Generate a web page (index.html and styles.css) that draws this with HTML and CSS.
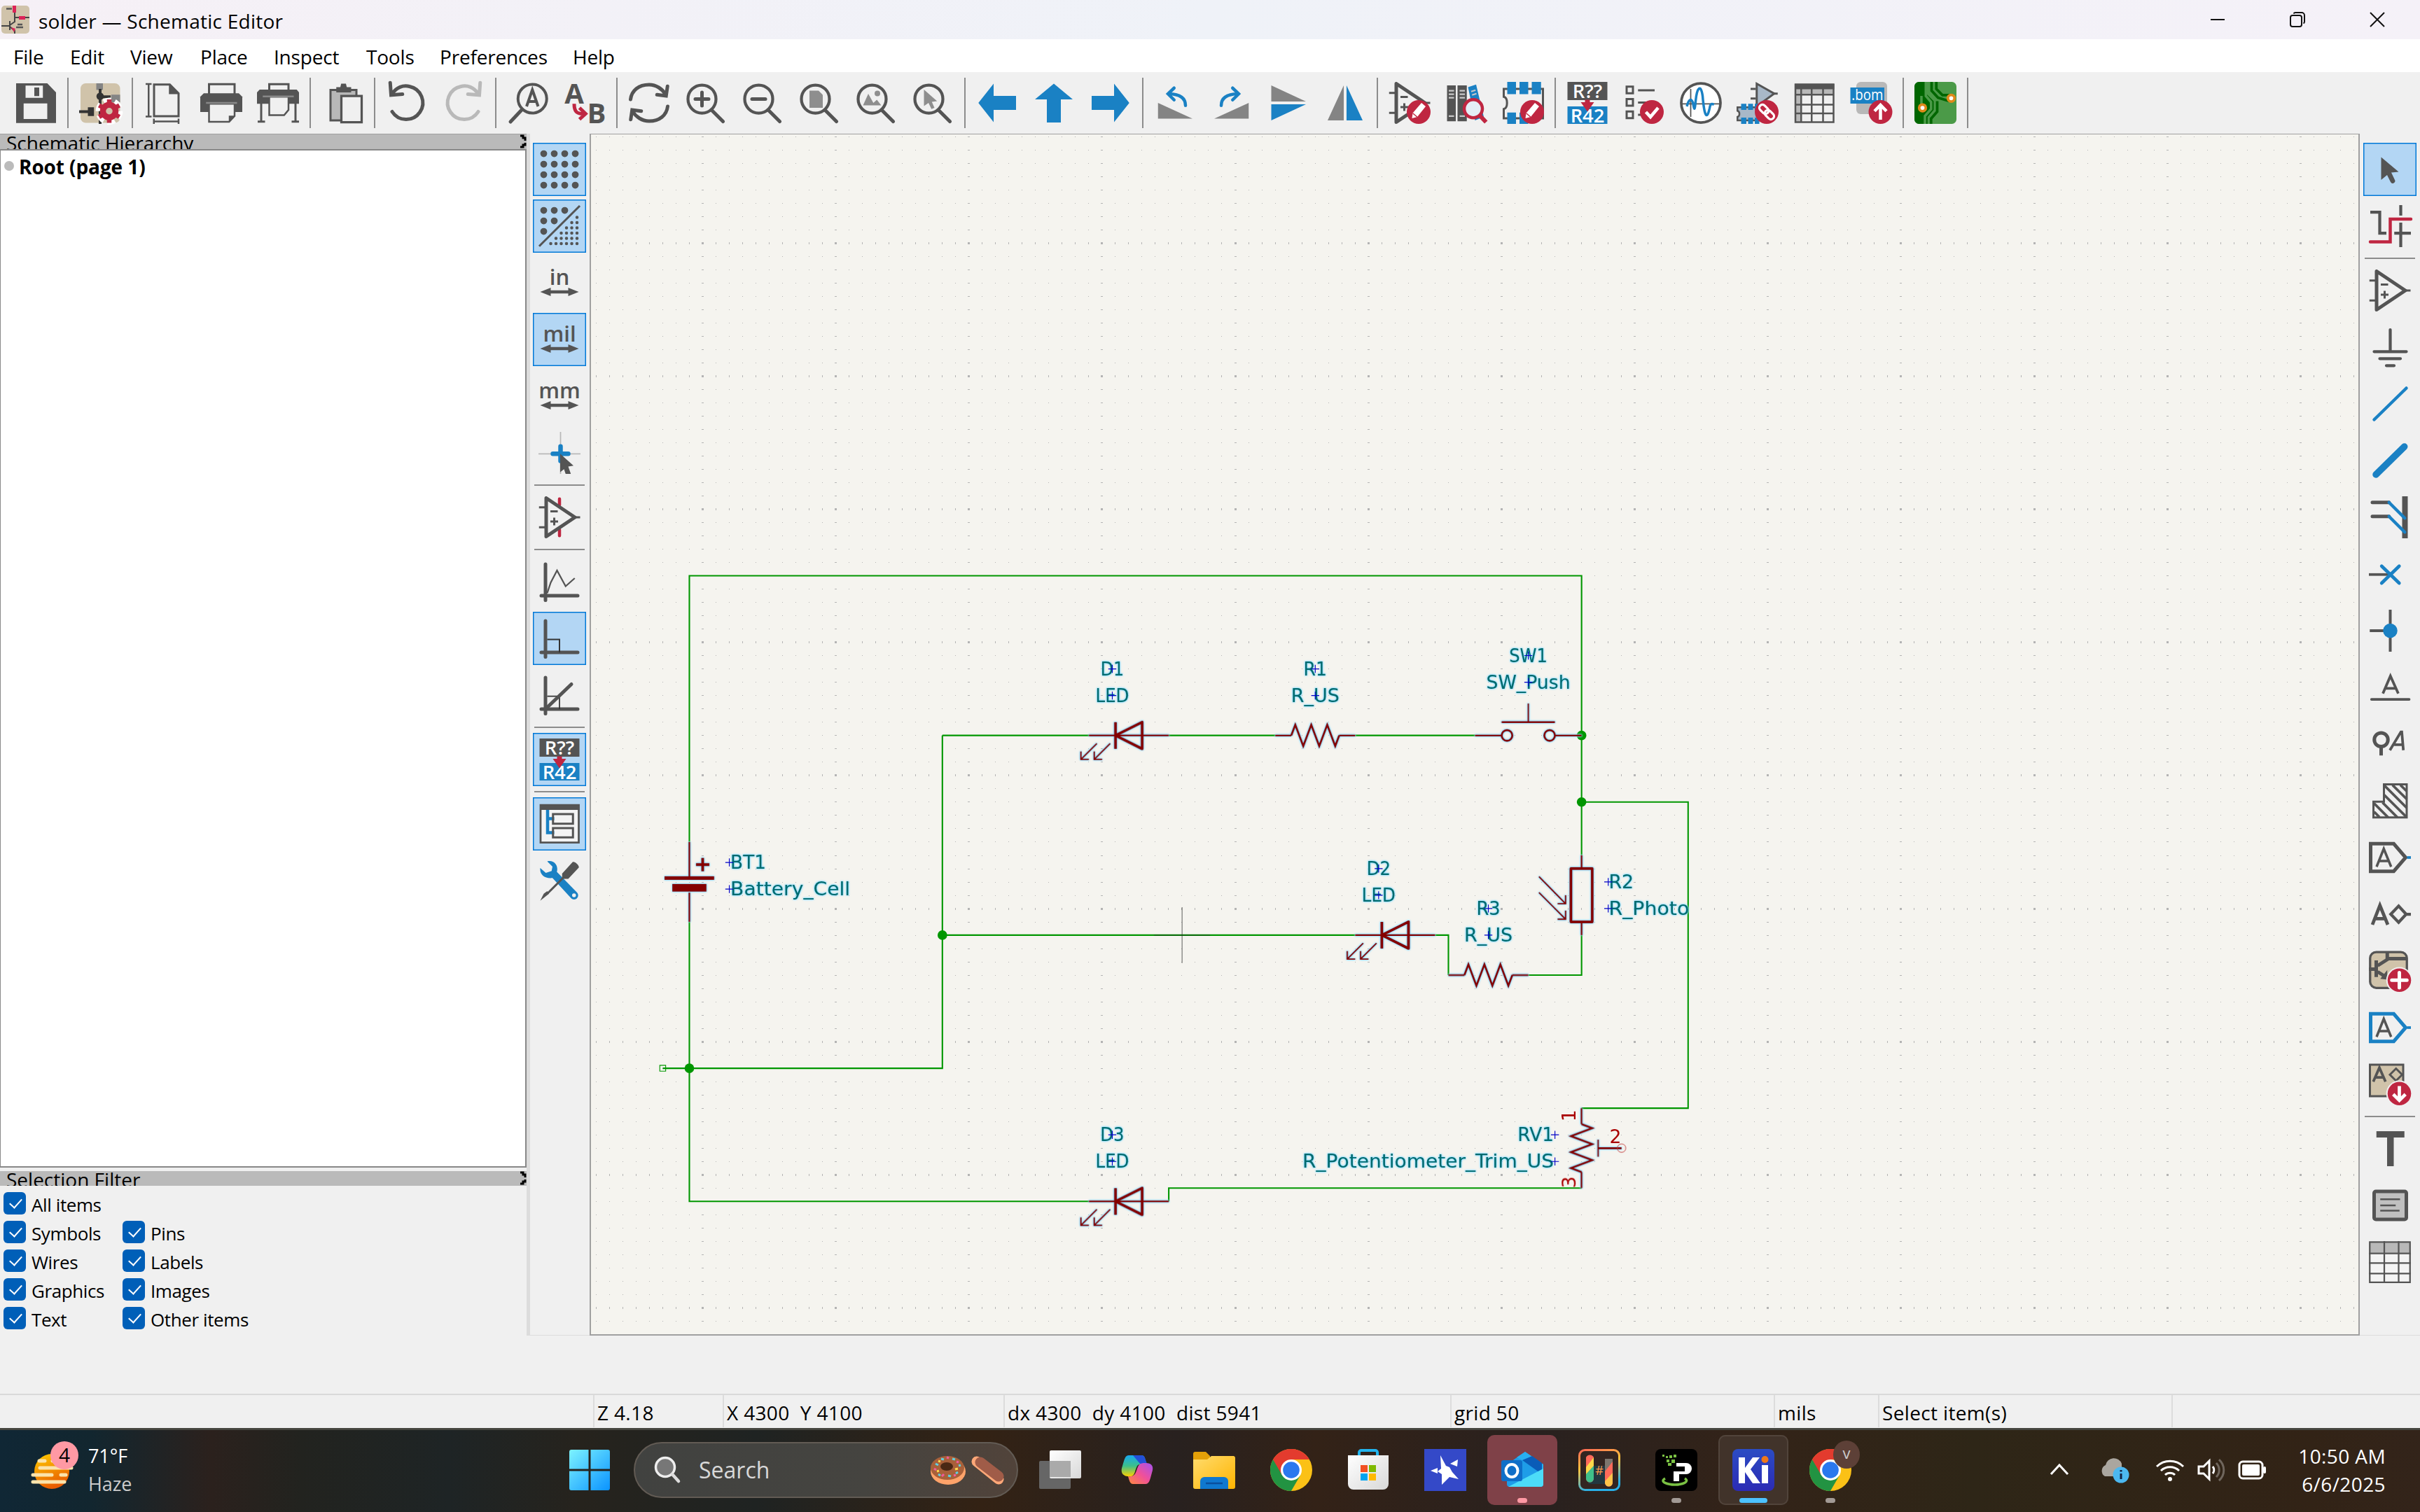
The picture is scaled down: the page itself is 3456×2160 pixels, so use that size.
FILE: index.html
```html
<!DOCTYPE html>
<html lang="en">
<head>
<meta charset="utf-8">
<title>solder — Schematic Editor</title>
<link rel="stylesheet" href="styles.css">
</head>
<body>
<svg class="defs" width="0" height="0">
  <defs>
    <linearGradient id="winGrad" x1="0" y1="0" x2="1" y2="1"><stop offset="0" stop-color="#7df3ff"/><stop offset="1" stop-color="#0a93ff"/></linearGradient>
    <linearGradient id="sunGrad" x1="0" y1="0" x2=".4" y2="1"><stop offset="0" stop-color="#ffcf00"/><stop offset="1" stop-color="#e85c00"/></linearGradient>
    <linearGradient id="folderGrad" x1="0" y1="0" x2="1" y2="1"><stop offset="0" stop-color="#ffdc6e"/><stop offset="1" stop-color="#ffb400"/></linearGradient>
    <linearGradient id="copA" x1="0" y1="0" x2="0" y2="1"><stop offset="0" stop-color="#18a8f0"/><stop offset=".5" stop-color="#3cc08a"/><stop offset="1" stop-color="#ffd000"/></linearGradient>
    <linearGradient id="copB" x1="1" y1="0" x2="0" y2="1"><stop offset="0" stop-color="#a452f0"/><stop offset=".5" stop-color="#f0509a"/><stop offset="1" stop-color="#ff8a3c"/></linearGradient>
    <linearGradient id="rainbow" x1="0" y1="0" x2=".3" y2="1"><stop offset="0" stop-color="#ff6a55"/><stop offset=".45" stop-color="#ffc43c"/><stop offset="1" stop-color="#28b0e8"/></linearGradient>
    <linearGradient id="kiGrad" x1="0" y1="0" x2="0" y2="1"><stop offset="0" stop-color="#2b4cc4"/><stop offset="1" stop-color="#2c2bb4"/></linearGradient>
    <linearGradient id="grayGrad" x1="0" y1="0" x2="1" y2="1"><stop offset="0" stop-color="#fff"/><stop offset="1" stop-color="#d8d8d8"/></linearGradient>

    <!-- schematic symbols, in mils -->
    <g id="led">
      <path class="pin" d="M-150 0H150"/>
      <path class="body" d="M-50-50V50M50-50V50L-50 0Z"/>
      <path class="thin" d="M-120 30L-180 90M-150 90H-180V60M-70 30L-130 90M-100 90H-130V60"/>
    </g>
    <g id="res">
      <path class="pin" d="M-150 0H-90M90 0H150"/>
      <path class="line" d="M-90 0L-75-40L-45 40L-15-40L15 40L45-40L75 40L90 0"/>
    </g>
    <path id="anchor" class="anchor" d="M-15 0H15M0-15V15"/>

    <symbol id="i-redit" viewBox="0 0 24 24"><circle cx="17.2" cy="17.2" r="6.800" fill="#bf2641"/><path d="M13.400 20.800L13.800 17.800L18.800 12L21.200 14L16.400 20Z" fill="#fff"/><path d="M13.800 17.900L16.300 20" stroke="#bf2641" stroke-width=".6"/></symbol>
    <symbol id="i-opamp" viewBox="0 0 24 24"><path class="g2" d="M4.400 1V23L20.800 12Z" stroke-linejoin="round"/><path class="g1" d="M.3 6.300H4M.3 17.700H4M20 12H23.800M6.800 8.600H11M6.800 14.400H11.200M9 12.200V16.600"/></symbol>
    <symbol id="i-r42" viewBox="0 0 24 24"><rect x=".6" y="0" width="22.800" height="10.400" fill="#545454"/><rect x=".6" y="14" width="22.800" height="10" fill="#1a81c4"/><text class="icotext" x="12" y="9.100" textLength="17" lengthAdjust="spacingAndGlyphs">R??</text><text class="icotext" x="12" y="23.300" textLength="19.500" lengthAdjust="spacingAndGlyphs">R42</text><path d="M10.600 10.200H13.400V11.600H15.800L12 17L8.200 11.600H10.600Z" fill="#bf2641"/></symbol>
    <symbol id="i-zoom" viewBox="0 0 24 24"><circle class="g1" cx="9.800" cy="9.800" r="8" style="stroke-width:1.7"/><path class="g2" d="M15.200 16L21.800 22.600" stroke-linecap="round"/></symbol>
    <symbol id="i-axis" viewBox="0 0 24 24"><path class="g2" d="M4 2V22.600M1.600 20H22.400" stroke-linecap="round"/></symbol>
    <symbol id="i-arrow2" viewBox="0 0 24 24"><path class="g2" d="M5 17.200H19" style="stroke-width:1.8"/><path class="gf" d="M1 17.200L7 14.800V19.600ZM23 17.200L17 14.800V19.600Z"/></symbol>
    <symbol id="i-tag" viewBox="0 0 24 24"><path d="M1 4.100H14.200L21 12L14.200 19.900H1Z" fill="none" stroke="currentColor" stroke-width="2"/><path d="M21.800 12H24" stroke="#1a81c4" stroke-width="1.500"/><path class="g1" d="M4.400 17.300L8.500 7L12.700 17.300M5.800 14H11.300" style="stroke-width:1.400"/></symbol>
    <symbol id="i-chrome" viewBox="0 0 60 60"><circle cx="30" cy="30" r="30" fill="#fbc116"/><path d="M4 15A30 30 0 0 0 30 60L43 37.500L30 30Z" fill="#229342"/><path d="M4 15L17 37.500L30 30V15H56A30 30 0 0 0 4 15Z" fill="#e33b2e"/><circle cx="30" cy="30" r="15" fill="#fff"/><circle cx="30" cy="30" r="11.800" fill="#2a78ee"/></symbol>
    <symbol id="i-arrowcur" viewBox="0 0 24 24"><path class="gf" d="M7 5L17 13.400L12.800 13.800L14.800 18A1.300 1.300 0 0 1 12.400 19.200L10.400 15.200L7 18Z"/></symbol>
  </defs>
</svg>

<header class="titlebar">
  <svg class="appicon" viewBox="0 0 40 40"><rect width="40" height="40" rx="5" fill="#d0c3aa"/><path d="M19 0V24M19 17H40M0 29H12M12 22V35M12 28L19 23M12 30L19 36V40" fill="none" stroke="#444" stroke-width="2"/><path d="M16 0H21V10H16ZM25 15H34V20H25Z" fill="#dc2458"/><path d="M14 31L20 33L18 38Z" fill="#dc2458"/><path d="M7 4.500H15M23 27H30M21 31H31" stroke="#555" stroke-width="2.500"/></svg>
  <span class="title">solder — Schematic Editor</span>
  <div class="winbtns">
    <svg viewBox="0 0 24 24"><path d="M2 12H22" /></svg>
    <svg viewBox="0 0 24 24"><rect x="2" y="6" width="16" height="16" rx="3"/><path d="M6.500 3.500A3 3 0 0 1 9 2H18A4 4 0 0 1 22 6V15A3 3 0 0 1 20.500 17.500"/></svg>
    <svg viewBox="0 0 24 24"><path d="M2 2L22 22M22 2L2 22"/></svg>
  </div>
</header>

<nav class="menubar"><span>File</span><span>Edit</span><span>View</span><span>Place</span><span>Inspect</span><span>Tools</span><span>Preferences</span><span>Help</span></nav>

<div class="toolbar">
  <div class="tb"><svg viewBox="0 0 24 24"><path class="gf" d="M.8.8H18.600L23.600 6V23.500H.8Z"/><path d="M6.200 2.100H16.100V9.100H6.200ZM5.100 12.300H18.600V21.200H5.100Z" fill="#f0f0f0"/><path class="gf" d="M11.200 3.200H14V8.100H11.200Z"/></svg></div>
  <i class="sep"></i>
  <div class="tb"><svg viewBox="0 0 24 24"><rect x=".8" y=".8" width="22.600" height="22.600" rx="3" fill="#d0c3aa"/><path d="M9.800.8H13.600V4.600H9.800ZM18.300 7.300H23.400V11.600H18.300Z" fill="#848484"/><path d="M12 4V24M12 8.500H18M0 17H7" stroke="#333" stroke-width="1.600"/><circle cx="12" cy="8.200" r="2.100" fill="#333"/><path d="M5 14.500H8.500V19.500H5Z" fill="#333"/><circle cx="17.200" cy="16.700" r="5" fill="none" stroke="#fff" stroke-width="5.500" stroke-dasharray="3.400 1.800"/><circle cx="17.200" cy="16.700" r="3.600" fill="none" stroke="#bf2641" stroke-width="3.400"/><path d="M17.200 10V12M17.200 21.400V23.400M11.400 13.400L13.200 14.400M21.200 19L23 20M11.400 20L13.200 19M21.200 14.400L23 13.400" stroke="#bf2641" stroke-width="2.600"/></svg></div>
  <i class="sep"></i>
  <div class="tb"><svg viewBox="0 0 24 24"><path class="g1" d="M6 1.500H15L20 6.500V19.600H6Z"/><path class="gf" d="M14.500 1L20.500 7H14.500Z"/><path class="g1" d="M2.900 1.300V19.700M1.200 1.200H4.600M1.200 19.800H4.600M6 22.600H20M5.900 21V24M20 21V24" style="stroke-width:1"/></svg></div>
  <div class="tb"><svg viewBox="0 0 24 24"><path class="g1" d="M5 7V1.300H19.600V7"/><path class="gf" d="M2 6.500H22L24 8.500V17.200H0V8.500Z"/><path d="M5 12.500H19.600V19.500L16.500 22.800H5Z" fill="#f0f0f0" stroke="#545454"/><path d="M3.300 12H21" stroke="#888"/><path class="gf" d="M19.800 19.300L16.300 23V19.300Z"/></svg></div>
  <div class="tb"><svg viewBox="0 0 24 24"><path class="g1" d="M7 5V1.300H18V5M2.400 12V22.600M22 12V22.600M.4 22.700H4.600M19.800 22.700H24"/><path class="gf" d="M1.500 4.400H22.700L24 6V12.500H0V6Z"/><path d="M7 8.500H18V16L15.500 19H7Z" fill="#f0f0f0" stroke="#545454"/><path d="M3.300 8.300H21" stroke="#888"/></svg></div>
  <i class="sep"></i>
  <div class="tb"><svg viewBox="0 0 24 24"><path d="M5.200 4.600H20V22H5.200Z" fill="#b8b8b8" stroke="#545454" stroke-width="1.200"/><path class="gf" d="M8.500 6V3H10.800L11.300 1H14L14.500 3H17V6Z"/><path d="M11.400 8H23V23H11.400Z" fill="#f0f0f0" stroke="#545454" stroke-width="1.300"/></svg></div>
  <i class="sep"></i>
  <div class="tb"><svg viewBox="0 0 24 24"><path class="g2" d="M2.500.5L3 7.500L9.500 7M3.500 7C6 3 10 1.700 13.500 2.600A9.500 9.500 0 1 1 3.600 17" stroke-linecap="round"/></svg></div>
  <div class="tb faded"><svg viewBox="0 0 24 24"><path class="g2" d="M21.500.5L21 7.500L14.500 7M20.500 7C18 3 14 1.700 10.500 2.600A9.500 9.500 0 1 0 20.400 17" stroke-linecap="round"/></svg></div>
  <i class="sep"></i>
  <div class="tb"><svg viewBox="0 0 24 24"><circle class="g1" cx="14.500" cy="9.600" r="8.200" style="stroke-width:1.600"/><path class="g2" d="M8.600 15.800L2 22.800" stroke-linecap="round"/><path class="g2" d="M11.200 14L14.500 4.500L17.800 14M12.200 11.200H16.800" style="stroke-width:1.600"/></svg></div>
  <div class="tb"><svg viewBox="0 0 24 24"><text x="6" y="12.300" class="lt">A</text><text x="18.800" y="23.400" class="lt">B</text><path d="M6 12.500C6 17 7.500 18.200 11 18.200M9 14.800L12.500 18.200L9 21.400" fill="none" stroke="#bf2641" stroke-width="2"/></svg></div>
  <i class="sep"></i>
  <div class="tb"><svg viewBox="0 0 24 24"><path class="g2" d="M1.400 10C2 5 6 1.600 12 1.600C16 1.600 19.500 4 21.500 7.200M22.500 2.500L21.700 8L16.500 7.300M22.600 14C22 19 18 22.400 12 22.400C8 22.400 4.500 20 2.500 16.800M1.500 21.500L2.300 16L7.500 16.700" stroke-linecap="round"/></svg></div>
  <div class="tb"><svg viewBox="0 0 24 24"><use href="#i-zoom"/><path class="g2" d="M6 9.800H13.600M9.800 6V13.600" stroke-linecap="round"/></svg></div>
  <div class="tb"><svg viewBox="0 0 24 24"><use href="#i-zoom"/><path class="g2" d="M6 9.800H13.600" stroke-linecap="round"/></svg></div>
  <div class="tb"><svg viewBox="0 0 24 24"><use href="#i-zoom"/><path d="M6.400 5H11.600L14 7.400V14.800H6.400Z" fill="#8e8e8e"/></svg></div>
  <div class="tb"><svg viewBox="0 0 24 24"><use href="#i-zoom"/><path d="M4.600 13.400L7.600 6.800L10.500 12L12.500 10.200L15 13.400Z" fill="#8e8e8e"/><circle cx="12.800" cy="6.600" r="1.600" fill="#8e8e8e"/></svg></div>
  <div class="tb"><svg viewBox="0 0 24 24"><use href="#i-zoom"/><path d="M7 4.400L14.500 11L11.500 11.400L13 14.800L11.300 15.500L9.600 12L7 13.800Z" fill="#8e8e8e"/></svg></div>
  <i class="sep"></i>
  <div class="tb blue"><svg viewBox="0 0 24 24"><path d="M1.300 12L10 1V8H22.800V16H10V23Z"/></svg></div>
  <div class="tb blue"><svg viewBox="0 0 24 24"><path d="M12 1L22.800 10H16V23.200H8V10H1.200Z"/></svg></div>
  <div class="tb blue"><svg viewBox="0 0 24 24"><path d="M22.700 12L14 1V8H1.200V16H14V23Z"/></svg></div>
  <i class="sep"></i>
  <div class="tb"><svg viewBox="0 0 24 24"><path d="M2.300 12L22 21H2.300Z" fill="#848484"/><path class="b2" d="M18 13.500C18 9.500 15 7 8.500 6.800M11.500 3.500L8 6.800L11.500 10.300" stroke-linecap="round"/></svg></div>
  <div class="tb"><svg viewBox="0 0 24 24"><path d="M21.700 12L2 21H21.700Z" fill="#848484"/><path class="b2" d="M6 13.500C6 9.500 9 7 15.500 6.800M12.500 3.500L16 6.800L12.500 10.300" stroke-linecap="round"/></svg></div>
  <div class="tb"><svg viewBox="0 0 24 24"><path d="M2.200 2L22 11.200H2.200Z" fill="#848484"/><path d="M2.200 22L22 12.800H2.200Z" fill="#1a81c4"/></svg></div>
  <div class="tb"><svg viewBox="0 0 24 24"><path d="M2 22L11.200 2V22Z" fill="#848484"/><path d="M22 22L12.800 2V22Z" fill="#1a81c4"/></svg></div>
  <i class="sep"></i>
  <div class="tb"><svg viewBox="0 0 24 24"><use href="#i-opamp"/><use href="#i-redit"/></svg></div>
  <div class="tb"><svg viewBox="0 0 24 24"><path class="gf" d="M1 2H6V22.500H1ZM7 2H12.300V22.500H7Z"/><path d="M13 3L17.600 1.500L22 20L17 22Z" fill="#1a81c4"/><path d="M2 5H5M2 7H5M2 9H5M8.200 5H11.200M8.200 7H11.200M8.200 9H11.200M2 19.500H5M8.200 19.500H11.200M14.800 5.500L17.300 4.700M15.300 7.500L17.800 6.700" stroke="#c8c8c8" stroke-width=".9"/><circle cx="16" cy="15.300" r="5.200" fill="#e4eef6" stroke="#bf2641" stroke-width="1.800"/><path d="M19.500 19L23.300 23" stroke="#bf2641" stroke-width="2.400"/></svg></div>
  <div class="tb"><svg viewBox="0 0 24 24"><path class="g1" d="M1 4H23.400V20.800H1V15.500C3.500 15 3.500 9 1 8.500Z"/><path d="M3 0H8V7H3ZM10 0H15V7H10ZM17 0H22.300V7H17ZM3 17.500H8V24H3ZM10 17.500H15V24H10Z" fill="#1a81c4"/><use href="#i-redit"/></svg></div>
  <i class="sep"></i>
  <div class="tb"><svg viewBox="0 0 24 24"><use href="#i-r42"/></svg></div>
  <div class="tb"><svg viewBox="0 0 24 24"><path class="g1" d="M2 2.700H5.600V6.500H2ZM2 9.800H5.600V13.600H2ZM2 16.900H5.600V20.700H2ZM8.500 4.800H18M8.500 11.800H15M8.500 18.800H11"/><circle cx="16.400" cy="17.200" r="6.800" fill="#bf2641"/><path d="M13 17.200L15.600 20L20 14.800" fill="none" stroke="#fff" stroke-width="1.800"/></svg></div>
  <div class="tb"><svg viewBox="0 0 24 24"><circle cx="12" cy="12" r="11.200" fill="#fff" stroke="#545454" stroke-width="1.500"/><path class="g1" d="M6.200 4V20M1 12.500H23" style="stroke-width:.7"/><path class="b2" d="M4 14C5 10 6.500 9 7.500 12C8.300 17 8.600 16 9 11C9.800 3 12 1 13 8C14 20 15.500 22 17 15C17.500 12 18.500 12.500 19.500 13" style="stroke-width:1.400"/></svg></div>
  <div class="tb"><svg viewBox="0 0 24 24"><path d="M11.500 1V14L21.500 6.700Z" fill="#a8b8c8" stroke="#545454" stroke-width="1.200"/><path class="g1" d="M8 4H11M8 9.500H11M21 6.700H23.500"/><path d="M.5 14.500H13V22H.5V20C2 19.500 2 17 .5 16.500Z" fill="#a8b8c8" stroke="#545454"/><path d="M2.600 12.500H5.600V16H2.600ZM6.600 12.500H9.400V16H6.600ZM10.400 12.500H13V16H10.400ZM2.600 20.400H5.600V24H2.600ZM6.600 20.400H9.400V24H6.600ZM10.400 20.400H13V24H10.400Z" fill="#1a81c4"/><circle cx="17.200" cy="17.200" r="6.800" fill="#bf2641"/><g transform="rotate(45 17.200 17.200)" fill="none" stroke="#fff" stroke-width="1.300"><rect x="12" y="15.400" width="6" height="3.600" rx="1.800"/><rect x="16.400" y="15.400" width="6" height="3.600" rx="1.800"/></g></svg></div>
  <div class="tb"><svg viewBox="0 0 24 24"><path d="M1.200 1.500H23V23H1.200Z" fill="#f0f0f0"/><path d="M1.200 3.500H23V7.200H1.200ZM1.200 3H4.200V23H1.200Z" fill="#b8b8b8"/><path class="g1" d="M1.200 1.500H23V23H1.200ZM1 7.300H23M1 13H23M1 18H23M4.500 4V23M10.500 4V23M17 4V23" style="stroke-width:1"/><path class="gf" d="M.8 1H23.400V4.200H.8Z"/></svg></div>
  <div class="tb"><svg viewBox="0 0 24 24"><rect x="3.600" y="0" width="17.600" height="18.400" rx="2.500" fill="#b8b8b8"/><path d="M.2 3.200H19.600V12.400H.2Z" fill="#1a81c4"/><text class="bomtxt" x="9.900" y="10.300" textLength="18" lengthAdjust="spacingAndGlyphs">.bom</text><circle cx="17.400" cy="17.200" r="6.800" fill="#bf2641"/><path d="M17.400 21.600V14M14 16.700L17.400 13.200L20.800 16.700" fill="none" stroke="#fff" stroke-width="1.800"/></svg></div>
  <i class="sep"></i>
  <div class="tb"><svg viewBox="0 0 24 24"><rect width="24" height="24" rx="2.600" fill="#4b9a48"/><path d="M2.600 0H7V7L11 11V16L7.500 20V24H2.600A2.600 2.600 0 0 1 0 21.400V2.600A2.600 2.600 0 0 1 2.600 0Z" fill="#006600"/><path d="M9.800 0V5L13.500 9L20 11M12.500 0V4L16 7.500H20M13 11V17L9.500 21V24" fill="none" stroke="#006600" stroke-width="1.500"/><path d="M4 15V8M6.500 0V8L9.500 11.500V15.500L6 19.500V24" fill="none" stroke="#4b9a48" stroke-width="1.400"/><circle cx="4.600" cy="14.800" r="1.900" fill="#fff" stroke="#e08a1a" stroke-width="1.500"/><circle cx="21" cy="9.300" r="1.900" fill="#fff" stroke="#e08a1a" stroke-width="1.500"/></svg></div>
  <i class="sep"></i>
</div>

<main class="work">
  <aside class="dock">
    <div class="cap"><span>Schematic Hierarchy</span><svg class="x" viewBox="0 0 10 20"><path d="M1 2H5V5H8V9M8 12V15H5V18H1"/></svg></div>
    <div class="tree"><i class="dot"></i><b>Root (page 1)</b></div>
    <div class="cap second"><span>Selection Filter</span><svg class="x" viewBox="0 0 10 20"><path d="M1 2H5V5H8V9M8 12V15H5V18H1"/></svg></div>
    <div class="filter">
      <label class="wide"><i class="cb"></i>All items</label>
      <label><i class="cb"></i>Symbols</label><label><i class="cb"></i>Pins</label>
      <label><i class="cb"></i>Wires</label><label><i class="cb"></i>Labels</label>
      <label><i class="cb"></i>Graphics</label><label><i class="cb"></i>Images</label>
      <label><i class="cb"></i>Text</label><label><i class="cb"></i>Other items</label>
    </div>
  </aside>
  <i class="sash"></i>

  <div class="vbar">
    <div class="vb on"><svg viewBox="0 0 24 24"><path class="dots" d="M3 3h.01M9 3h.01M15 3h.01M21 3h.01M3 9h.01M9 9h.01M15 9h.01M21 9h.01M3 15h.01M9 15h.01M15 15h.01M21 15h.01M3 21h.01M9 21h.01M15 21h.01M21 21h.01"/></svg></div>
    <div class="vb on"><svg viewBox="0 0 24 24"><path class="dots" d="M3 3h.01M9 3h.01M15 3h.01M3 9h.01M9 9h.01M3 15h.01"/><path class="g1" d="M.4 23.500L23.600.4"/><path class="dots sm" d="M22 7h.01M19 10h.01M22 10h.01M16 13h.01M19 13h.01M22 13h.01M13 16h.01M16 16h.01M19 16h.01M22 16h.01M10 19h.01M13 19h.01M16 19h.01M19 19h.01M22 19h.01M7 22h.01M10 22h.01M13 22h.01M16 22h.01M19 22h.01M22 22h.01"/></svg></div>
    <div class="vb"><svg viewBox="0 0 24 24"><text class="unit" x="12" y="13">in</text><use href="#i-arrow2"/></svg></div>
    <div class="vb on"><svg viewBox="0 0 24 24"><text class="unit" x="12" y="13">mil</text><use href="#i-arrow2"/></svg></div>
    <div class="vb"><svg viewBox="0 0 24 24"><text class="unit" x="12" y="13">mm</text><use href="#i-arrow2"/></svg></div>
    <div class="vb"><svg viewBox="0 0 24 24"><path d="M12.600 0V24M0 12.500H24" stroke="#b8b8b8" stroke-width=".7"/><path class="b2" d="M12.600 8.300V16.600M8.200 12.500H17" stroke-linecap="round" style="stroke-width:2.600"/><path class="gf" d="M12.400 12.500L20 19.300L17 19.800L18.500 24H15.500L14.600 21.300L12.400 23Z"/></svg></div>
    <i class="hsep"></i>
    <div class="vb"><svg viewBox="0 0 24 24"><path d="M12 1.500V5M12 19V22.500" stroke="#bf2641" stroke-width="1.800" stroke-linecap="round"/><use href="#i-opamp"/></svg></div>
    <i class="hsep"></i>
    <div class="vb"><svg viewBox="0 0 24 24"><use href="#i-axis"/><path class="g1" d="M5 18.500L7 12.500L10.600 5.600L15.500 14.600L20.700 10" style="stroke-width:.9"/></svg></div>
    <div class="vb on"><svg viewBox="0 0 24 24"><use href="#i-axis"/><path class="g1" d="M5 12.600H12V20" style="stroke-width:.8;stroke:#333"/></svg></div>
    <div class="vb"><svg viewBox="0 0 24 24"><use href="#i-axis"/><path class="g1" d="M5 12.600H12V20" style="stroke-width:.7;stroke:#333"/><path class="g2" d="M5 19L18.800 5.800" stroke-linecap="round"/></svg></div>
    <i class="hsep"></i>
    <div class="vb on"><svg viewBox="0 0 24 24"><use href="#i-r42"/></svg></div>
    <i class="hsep"></i>
    <div class="vb on"><svg viewBox="0 0 24 24"><path d="M1.200 1.200H23V22.600H1.200Z" fill="#f4f4f4" stroke="#545454" stroke-width="1.100"/><path class="gf" d="M.8.800H23.400V4H.8Z"/><path class="b2" d="M5.200 4V17H9M5.200 9H9"/><path class="g1" d="M8.300 6.400H19.700V11.900H8.300ZM8.300 14.400H19.700V19.700H8.300Z"/></svg></div>
    <div class="vb"><svg viewBox="0 0 24 24"><path d="M5 1C9 0 11.500 3.500 10.500 7L22 18.800C24 21 21 24.300 18.600 22L8 10.500C3.500 11 .6 8.500 1 4.800L4.200 7.600L7.500 6.500L8 4Z" fill="#1a81c4"/><circle cx="20.300" cy="20.400" r="1.100" fill="#f0f0f0"/><path class="g1" d="M14.500 10L5 19.500"/><path class="gf" d="M13.500 8L19.500 1.400C20.500.6 23.600 3.400 23 4.600L17 11L13.500 11ZM1 23.500L3 19.500L5 18L6 19.500Z"/></svg></div>
  </div>

  <section class="sheet">
    <svg class="schematic" width="2525" height="1715" viewBox="0 0 2525 1715">
      <path id="grid" class="grid"/>
      <!-- origin sits on a major grid crossing, 50 mil = one grid step -->
      <g transform="translate(159.500 155) scale(.38035)">
        <g class="wire">
          <path d="M-50 2250V1250H3300V2300M3300 2600V2750H3100M3300 2100H3700V3250H3300M900 1850V3100H-150M900 1850H1450M900 2600H2450M2750 2600H2800V2750M-50 2550V3600H1450M1750 3600V3550H3300M1750 1850H2150M2450 1850H2900"/>
          <path class="tiny" d="M-161 3089H-139V3111H-161Z"/>
        </g>
        <g class="junction"><circle cx="3300" cy="1850" r="18"/><circle cx="3300" cy="2100" r="18"/><circle cx="900" cy="2600" r="18"/><circle cx="-50" cy="3100" r="18"/></g>
        <g class="sym">
          <use href="#led" x="1600" y="1850"/><use href="#led" x="2600" y="2600"/><use href="#led" x="1600" y="3600"/>
          <use href="#res" x="2300" y="1850"/><use href="#res" x="2950" y="2750"/>
          <path class="pin" d="M2900 1850H3000M3200 1850H3300"/>
          <circle class="line" cx="3020" cy="1850" r="20"/><circle class="line" cx="3180" cy="1850" r="20"/>
          <path class="line" d="M3000 1800H3200"/><path class="thin" d="M3100 1800V1730"/>
          <path class="pin" d="M3300 2300V2350M3300 2550V2600"/>
          <rect class="body" x="3260" y="2350" width="80" height="200"/>
          <path class="thin" d="M3140 2380L3240 2482M3210 2482H3240V2450M3140 2440L3240 2540M3210 2540H3240V2508"/>
          <path class="pin" d="M-50 2250V2385M-50 2440V2550"/>
          <path d="M-143 2379H43V2392H-143ZM-114 2408H14V2436H-114Z" fill="#840000"/><path class="body" d="M-25 2335H25M0 2310V2360"/>
          <g transform="translate(3300 3400) rotate(90)"><use href="#res"/></g>
          <path class="line" d="M3362 3400H3450"/><path class="thin" d="M3362 3368V3432"/>
        </g>
        <circle class="open" cx="3450" cy="3400" r="16"/>
        <g class="pinno"><text transform="translate(3278 3278) rotate(-90)">1</text><text transform="translate(3278 3528) rotate(-90)">3</text><text x="3427" y="3382">2</text></g>
        <g class="label">
          <text x="1538" y="1624" textLength="88" lengthAdjust="spacingAndGlyphs">D1</text><text x="1538" y="1724" textLength="126" lengthAdjust="spacingAndGlyphs">LED</text>
          <text x="2300" y="1624" textLength="88" lengthAdjust="spacingAndGlyphs">R1</text><text x="2300" y="1724" textLength="182" lengthAdjust="spacingAndGlyphs">R_US</text>
          <text x="3100" y="1574" textLength="144" lengthAdjust="spacingAndGlyphs">SW1</text><text x="3100" y="1674" textLength="316" lengthAdjust="spacingAndGlyphs">SW_Push</text>
          <text x="2538" y="2374" textLength="90" lengthAdjust="spacingAndGlyphs">D2</text><text x="2538" y="2474" textLength="126" lengthAdjust="spacingAndGlyphs">LED</text>
          <text x="2950" y="2524" textLength="90" lengthAdjust="spacingAndGlyphs">R3</text><text x="2950" y="2624" textLength="182" lengthAdjust="spacingAndGlyphs">R_US</text>
          <text x="1538" y="3374" textLength="90" lengthAdjust="spacingAndGlyphs">D3</text><text x="1538" y="3474" textLength="126" lengthAdjust="spacingAndGlyphs">LED</text>
        </g>
        <g class="label start">
          <text x="104" y="2351" textLength="134" lengthAdjust="spacingAndGlyphs">BT1</text><text x="104" y="2451" textLength="450" lengthAdjust="spacingAndGlyphs">Battery_Cell</text>
          <text x="3402" y="2424" textLength="94" lengthAdjust="spacingAndGlyphs">R2</text><text x="3402" y="2524" textLength="302" lengthAdjust="spacingAndGlyphs">R_Photo</text>
        </g>
        <g class="label end"><text x="3196" y="3374" textLength="136" lengthAdjust="spacingAndGlyphs">RV1</text><text x="3196" y="3474" textLength="944" lengthAdjust="spacingAndGlyphs">R_Potentiometer_Trim_US</text></g>
        <use href="#anchor" x="1538" y="1600"/><use href="#anchor" x="1538" y="1700"/><use href="#anchor" x="2300" y="1600"/><use href="#anchor" x="2300" y="1700"/><use href="#anchor" x="3100" y="1550"/><use href="#anchor" x="3100" y="1650"/>
        <use href="#anchor" x="2538" y="2350"/><use href="#anchor" x="2538" y="2450"/><use href="#anchor" x="2950" y="2500"/><use href="#anchor" x="2950" y="2600"/><use href="#anchor" x="1538" y="3350"/><use href="#anchor" x="1538" y="3450"/>
        <use href="#anchor" x="100" y="2327"/><use href="#anchor" x="100" y="2427"/><use href="#anchor" x="3400" y="2400"/><use href="#anchor" x="3400" y="2500"/><use href="#anchor" x="3200" y="3350"/><use href="#anchor" x="3200" y="3450"/>
        <path class="cursor" d="M1800 2495V2705M1695 2600H1905"/>
      </g>
    </svg>
  </section>

  <div class="vbar right">
    <div class="vb on"><svg viewBox="0 0 24 24"><use href="#i-arrowcur"/></svg></div>
    <div class="vb"><svg viewBox="0 0 24 24"><path class="g2" d="M.8 4H6.200V16H10M14.500 16H24M18.200 0V24" style="stroke-width:1.700"/><path d="M.8 21H12.200V8H24" fill="none" stroke="#f0f0f0" stroke-width="4"/><path d="M.8 21H12.200V8H24" fill="none" stroke="#bf2641" stroke-width="1.800" stroke-linecap="round"/></svg></div>
    <i class="hsep"></i>
    <div class="vb"><svg viewBox="0 0 24 24"><use href="#i-opamp"/></svg></div>
    <div class="vb"><svg viewBox="0 0 24 24"><path class="g2" d="M12.200 2V14.500M3 14.500H21.400M6.200 18.500H18M10 22.500H14.400" stroke-linecap="round" style="stroke-width:1.700"/></svg></div>
    <div class="vb"><svg viewBox="0 0 24 24"><path class="b2" d="M3 21L21.400 3" stroke-linecap="round"/></svg></div>
    <div class="vb"><svg viewBox="0 0 24 24"><path class="b2" d="M4 20L20.300 4" stroke-linecap="round" style="stroke-width:3.800"/></svg></div>
    <div class="vb"><svg viewBox="0 0 24 24"><path class="g2" d="M2 3.500H11.500M2 11.500H11.500" stroke-linecap="round"/><path class="gf" d="M19 0H22.200V24H19Z"/><path class="b2" d="M11.500 3.500L20.500 12.500M11.500 11.500L20.500 20.500" stroke-linecap="round"/></svg></div>
    <div class="vb"><svg viewBox="0 0 24 24"><path class="g2" d="M0 12.300H12" style="stroke-width:1.500"/><path class="b2" d="M7.300 7.500L17.300 17.200M17.300 7.500L7.300 17.200" stroke-linecap="round" style="stroke-width:1.900"/></svg></div>
    <div class="vb"><svg viewBox="0 0 24 24"><path class="g2" d="M12.200 0V24M.5 12H12" style="stroke-width:1.600"/><circle cx="12.200" cy="12" r="4.100" fill="#1a81c4"/></svg></div>
    <div class="vb"><svg viewBox="0 0 24 24"><path class="g2" d="M8 15.500L12.300 5.500L16.800 15.500M9.600 12.500H15" style="stroke-width:1.500"/><path class="g2" d="M1.500 18.800H23" stroke-linecap="round" style="stroke-width:1.500"/></svg></div>
    <div class="vb"><svg viewBox="0 0 24 24"><circle class="g2" cx="7" cy="9.500" r="3.900"/><path class="g2" d="M7 13.500V18.500"/><path class="g1" d="M12 15.500L18.300 5H18.800L19.700 15.500M14.500 12.300H19.500" style="stroke-width:1.500"/></svg></div>
    <div class="vb"><svg viewBox="0 0 24 24"><path class="g1" d="M2.600 21.500V12.500H8.600V2.600H21.600V21.500Z"/><path class="g2" d="M8.600 3L21.600 16M8.600 8.500L21.200 21M13.500 3L21.600 11M18 3L21.600 6.500M7.800 13L16.300 21.500M3 13.500L11 21.500M3 18.300L6 21.300" style="stroke-width:1.500"/></svg></div>
    <div class="vb tagdark"><svg viewBox="0 0 24 24"><use href="#i-tag"/></svg></div>
    <div class="vb"><svg viewBox="0 0 24 24"><path class="g2" d="M2 18L6.300 7L10.800 18M3.600 14.500H9.200" style="stroke-width:1.900"/><path class="g2" d="M12.500 12L17 7.300L21.300 12L17 16.700ZM21.300 12H24" style="stroke-width:1.700"/></svg></div>
    <div class="vb"><svg viewBox="0 0 24 24"><rect x=".7" y="1.200" width="21" height="20.500" rx="3.500" fill="#d0c3aa" stroke="#545454" stroke-width="1.300"/><path class="g2" d="M0 11H4M10.500 1V5.500L5 9M10.500 5H22M5 12.500L9 15"/><path class="gf" d="M3.200 6H5.200V15.500H3.200ZM6.500 16.500L10.500 11.500V17Z"/><circle cx="17.400" cy="17.300" r="7.500" fill="#f0f0f0"/><circle cx="17.400" cy="17.300" r="6.700" fill="#bf2641"/><path d="M17.400 13V21.600M13.100 17.300H21.700" stroke="#fff" stroke-width="2" stroke-linecap="round"/></svg></div>
    <div class="vb tagblue"><svg viewBox="0 0 24 24"><use href="#i-tag"/></svg></div>
    <div class="vb"><svg viewBox="0 0 24 24"><rect x=".6" y=".8" width="19" height="18" fill="#d0c3aa" stroke="#545454" stroke-width="1.200"/><path class="g2" d="M2.500 10.500L6 2.500L9.500 10.500M3.600 8H8.400" style="stroke-width:1.500"/><path class="g1" d="M12 6.500L15.500 3L19 6.500L15.500 10Z"/><circle cx="17.400" cy="17.300" r="7.500" fill="#f0f0f0"/><circle cx="17.400" cy="17.300" r="6.700" fill="#bf2641"/><path d="M17.400 13V21M13.900 17.700L17.400 21.200L20.900 17.700" fill="none" stroke="#fff" stroke-width="1.900"/></svg></div>
    <i class="hsep"></i>
    <div class="vb"><svg viewBox="0 0 24 24"><path class="gf" d="M4.300 2H20.300V5.600H14.200V22H10.400V5.600H4.300Z"/></svg></div>
    <div class="vb"><svg viewBox="0 0 24 24"><rect x="3" y="4" width="18.400" height="16" rx="1" fill="#c0c0c0" stroke="#545454" stroke-width="2"/><path class="g1" d="M6.500 8.500H17.800M6.500 12H15.300M6.500 15H17.500" style="stroke-width:1"/></svg></div>
    <div class="vb"><svg viewBox="0 0 24 24"><path d="M.5.500H23.500V23.500H.5Z" fill="#f4f4f4"/><path d="M.5.500H23.500V7H.5Z" fill="#b8b8b8"/><path class="g1" d="M.5.500H23.500V23.500H.5ZM0 7H24M0 12.500H24M0 18.500H24M8.800 0V24M17 0V24" style="stroke-width:.9"/></svg></div>
  </div>
</main>

<footer class="status"><span></span><span>Z 4.18</span><span>X 4300&nbsp; Y 4100</span><span>dx 4300&nbsp; dy 4100&nbsp; dist 5941</span><span>grid 50</span><span>mils</span><span>Select item(s)</span><span></span></footer>

<div class="taskbar">
  <div class="weather">
    <svg width="70" height="70" viewBox="0 0 70 70"><circle cx="30" cy="44" r="25" fill="url(#sunGrad)"/><path d="M12 29H20M31 29H40M13 39H58M3 49H30M43 49H50M3 59H48" stroke="#fbe3ac" stroke-width="5" stroke-linecap="round"/><circle cx="48" cy="21" r="20" fill="#ff99a4"/><text x="48" y="31" text-anchor="middle" font-size="28">4</text></svg>
    <p><span>71°F</span><span class="dim">Haze</span></p>
  </div>
  <svg class="start" viewBox="0 0 58 58"><path d="M0 3A3 3 0 0 1 3 0H27.500V27.500H0ZM30.500 0H55A3 3 0 0 1 58 3V27.500H30.500ZM0 30.500H27.500V58H3A3 3 0 0 1 0 55ZM30.500 30.500H58V55A3 3 0 0 1 55 58H30.500Z" fill="url(#winGrad)"/></svg>
  <div class="search">
    <svg width="40" height="40" viewBox="0 0 40 40"><circle cx="17" cy="16" r="13.500" fill="#777" stroke="#eee" stroke-width="3.500"/><path d="M27 26L36 36" stroke="#ddd" stroke-width="4.500" stroke-linecap="round"/></svg>
    <span>Search</span>
    <svg class="food" width="110" height="42" viewBox="0 0 110 42"><ellipse cx="26" cy="23" rx="25" ry="19" fill="#ffa36a"/><ellipse cx="25" cy="18" rx="24" ry="17" fill="#a8603a"/><ellipse cx="24" cy="16" rx="9" ry="6" fill="#4a2814"/><path d="M8 12l4 2M16 5l4 1M32 5l4 1M42 13l1 3M40 24l-3 2M26 29l4 1M12 27l3 2" stroke="#5fd0e0" stroke-width="3"/><path d="M6 19l3 2M24 3l3 1M38 9l3 1M20 27l-3 3M34 29l3-1" stroke="#f05a9a" stroke-width="3"/><path d="M10 23l3-1M36 20l4-1M12 8l3 1" stroke="#ffd84a" stroke-width="3"/><path d="M67 9L98 34" stroke="#ffa878" stroke-width="15" stroke-linecap="round"/><path d="M72 10L98 30" stroke="#a05c48" stroke-width="15" stroke-linecap="round"/></svg>
  </div>
  <div class="apps">
    <div class="app"><svg viewBox="0 0 60 60"><rect x="0" y="17" width="45" height="40" rx="2" fill="#666"/><rect x="15" y="2" width="45" height="40" rx="2" fill="url(#grayGrad)"/><path d="M15 17H45V40H15Z" fill="#aaa"/></svg></div>
    <div class="app"><svg viewBox="0 0 60 60"><path d="M18 9H36C40 9 41 12 42 16L44 22H34C30 22 29 26 27 32C25 39 22 40 16 39C8 38 6 32 9 24C12 14 13 9 18 9Z" fill="url(#copA)"/><path d="M24 9H36C40 9 41 12 42 16L44 21H34Z" fill="#2350d8"/><path d="M42 50H24C20 50 19 46 17 39C24 40 27 37 29 31C32 22 33 20 42 20C52 20 54 26 51 34C48 45 47 50 42 50Z" fill="url(#copB)"/></svg></div>
    <div class="app"><svg viewBox="0 0 60 60"><path d="M0 7A3 3 0 0 1 3 4H18L24 10V20H0Z" fill="#e3a008"/><path d="M0 15H20L26 10H58A3 3 0 0 1 60 13V54A3 3 0 0 1 57 57H3A3 3 0 0 1 0 54Z" fill="url(#folderGrad)"/><path d="M10 57V46A6 6 0 0 1 16 40H44A6 6 0 0 1 50 46V57Z" fill="#0f78cf"/><path d="M18 49H42" stroke="#0a4f9c" stroke-width="2.500"/></svg></div>
    <div class="app"><svg viewBox="0 0 60 60"><use href="#i-chrome"/></svg></div>
    <div class="app"><svg viewBox="0 0 60 60"><path d="M17 14V5A3 3 0 0 1 20 2H40A3 3 0 0 1 43 5V14" fill="none" stroke="#22b4ee" stroke-width="4"/><path d="M1 9H59V50A8 8 0 0 1 51 58H9A8 8 0 0 1 1 50Z" fill="url(#grayGrad)"/><path d="M19 23H29V33H19Z" fill="#f25022"/><path d="M31 23H41V33H31Z" fill="#7fba00"/><path d="M19 35H29V45H19Z" fill="#00a4ef"/><path d="M31 35H41V45H31Z" fill="#ffb900"/></svg></div>
    <div class="app"><svg viewBox="0 0 60 60"><rect width="60" height="60" fill="#3449c8"/><path d="M23 9L31 24L36 26L40 33L49 43L36 40L25 51L25 36L19 32L24 28ZM48 15L47 25L37 21ZM9 31L19 27V35Z" fill="#fff"/></svg></div>
    <div class="app pink"><svg viewBox="0 0 60 60"><path d="M8 22L34 4L60 22V50A4 4 0 0 1 56 54H12A4 4 0 0 1 8 50Z" fill="#1e9de8"/><path d="M34 4L60 22V30L34 18L22 12Z" fill="#28b0f0"/><path d="M30 16L58 36V20L44 10Z" fill="#0a5cb8"/><path d="M10 54L60 28V50A4 4 0 0 1 56 54Z" fill="#4cdcf8"/><rect x="0" y="16" width="30" height="30" rx="3" fill="#0f6fc8"/><ellipse cx="15" cy="31" rx="8.500" ry="9" fill="none" stroke="#fff" stroke-width="4"/></svg><i class="dotmark"></i></div>
    <div class="app"><svg viewBox="0 0 60 60"><rect x="1.500" y="1.500" width="57" height="57" rx="8" fill="#332521" stroke="url(#rainbow)" stroke-width="3"/><path d="M22 24H38V50H14Z" fill="#223740"/><path d="M11 12A6 6 0 0 1 22 12V42A5 5 0 0 1 11 42Z" fill="#ff6a5a"/><path d="M11 26L22 12V24L11 36Z" fill="#ffd84a"/><path d="M11 36L22 24V42A5 5 0 0 1 11 42Z" fill="#3fc08a"/><path d="M38 18A6 6 0 0 1 49 18V48A5 5 0 0 1 38 48Z" fill="#ff6a5a"/><path d="M38 14H49V18L38 32Z" fill="#7d766e"/><path d="M38 46L49 34V48A5 5 0 0 1 38 48Z" fill="#ffc44a"/><text x="30" y="37" text-anchor="middle" font-size="18" fill="#ff9a4a">#</text></svg></div>
    <div class="app"><svg viewBox="0 0 60 60"><rect width="60" height="60" rx="8" fill="#000"/><path d="M30 20H44A7 7 0 0 1 44 36H34V46H26V32H42V25H30Z" fill="#fff"/><path d="M10 8h3v3h-3zM15 10h3v3h-3zM20 9h4v4h-4zM16 15h4v4h-4zM23 15h5v5h-5zM18 20h5v4h-5zM26 8h4v4h-4z" fill="#7ac143"/><path d="M14 42C5 47 18 51 28 51S50 47 42 42" fill="none" stroke="#7ac143" stroke-width="3.500"/></svg><i class="dotmark gray"></i></div>
    <div class="app active"><svg viewBox="0 0 60 60"><rect width="60" height="60" rx="8" fill="url(#kiGrad)"/><path d="M9 12H18V27L29 12H39L26 29L40 49H29L18 33V49H9ZM42 23H51V49H42Z" fill="#fff"/><circle cx="46.500" cy="15" r="5" fill="#f07818"/></svg><i class="dotmark wide"></i></div>
    <div class="app"><svg viewBox="0 0 60 60"><use href="#i-chrome"/></svg><span class="badge">v</span><i class="dotmark gray"></i></div>
  </div>
  <div class="tray">
    <svg width="28" height="28" viewBox="0 0 28 28"><path d="M2 20L14 7L26 20" class="w"/></svg>
    <svg width="46" height="46" viewBox="0 0 46 46"><path d="M8 32A9 9 0 0 1 9 16A12 12 0 0 1 32 14V32Z" fill="#aaa69f"/><circle cx="31" cy="30" r="11.500" fill="#4cb8f0"/><path d="M31 28V36M31 23V25.500" stroke="#124" stroke-width="3"/></svg>
    <svg width="42" height="42" viewBox="0 0 42 42"><path class="w" d="M2 16A27 27 0 0 1 40 16M8 22A19 19 0 0 1 34 22M14 28A10 10 0 0 1 28 28"/><circle cx="21" cy="34" r="3" fill="#fff"/></svg>
    <svg width="42" height="42" viewBox="0 0 42 42"><path class="w" d="M3 16H10L18 8V34L10 26H3ZM23 16A8 8 0 0 1 23 26"/><path class="w" opacity=".3" d="M28 11A14 14 0 0 1 28 31M32 6A20 20 0 0 1 32 36"/></svg>
    <svg width="42" height="42" viewBox="0 0 42 42"><rect class="w" x="2" y="9" width="33" height="24" rx="5"/><rect x="6" y="13" width="25" height="16" rx="2" fill="#fff"/><path d="M38 18V24" stroke="#fff" stroke-width="4" stroke-linecap="round"/></svg>
    <p class="clock"><span>10:50 AM</span><span>6/6/2025</span></p>
  </div>
</div>
<script src="grid.js"></script>
</body>
</html>
```
FILE: styles.css
```css
* { box-sizing: border-box; }
body { margin: 0; width: 3456px; height: 2160px; display: flex; flex-direction: column; overflow: hidden; background: #f0f0f0; color: #000; font: 28px/36px "Open Sans", "Noto Sans", sans-serif; letter-spacing: 0; }
.defs { position: absolute; }

.titlebar { height: 56px; display: flex; align-items: center; background: linear-gradient(90deg, #f6f0f6, #eff2f8 50%, #f5f1f8); }
.appicon { width: 40px; height: 40px; margin: 0 13px 0 2px; }
.title { padding-top: 4px; flex: 1; letter-spacing: .25px; }
.winbtns { display: flex; gap: 90px; padding-right: 49px; }
.winbtns svg { width: 24px; height: 24px; fill: none; stroke: #111; stroke-width: 2; }

.menubar { height: 47px; background: #fff; padding-left: 19px; display: grid; grid-template-columns: 81px 86px 100px 105px 132px 105px 190px 100px; line-height: 50px; letter-spacing: -.2px; }

.toolbar { height: 88px; padding-left: 10px; display: flex; align-items: center; }
.tb { width: 81px; display: flex; justify-content: center; }
.tb svg { width: 60px; height: 60px; overflow: visible; }
.sep { width: 11px; height: 72px; background: linear-gradient(#8c8c8c, #8c8c8c) 5px 0 / 2px 100% no-repeat; }
.faded { opacity: .35; }
.blue { fill: #1a81c4; }
.g1 { fill: none; stroke: #545454; stroke-width: 1.2; }
.g2 { fill: none; stroke: #545454; stroke-width: 2; }
.b2 { fill: none; stroke: #1a81c4; stroke-width: 1.8; }
.gf { fill: #545454; }
.icotext { font: 600 11px "Open Sans", sans-serif; fill: #fff; text-anchor: middle; letter-spacing: 0; }
.bomtxt { font: 8.5px "Open Sans", sans-serif; fill: #fff; text-anchor: middle; letter-spacing: 0; }
.lt { font: 700 16px "Open Sans", sans-serif; fill: #545454; text-anchor: middle; letter-spacing: 0; }
.unit { font: 600 12.5px "Open Sans", sans-serif; fill: #545454; text-anchor: middle; letter-spacing: 0; }
.dots { stroke: #545454; stroke-width: 3.9; stroke-linecap: round; }
.dots.sm { stroke-width: 1.8; }

.work { height: 1717px; display: flex; }
.dock { width: 752px; display: flex; flex-direction: column; border-top: 1px solid #a0a0a0; }
.cap { height: 21px; background: #bababa; overflow: hidden; display: flex; justify-content: space-between; line-height: 24px; padding-left: 9px; }
.cap .x { width: 10px; height: 20px; fill: none; stroke: #000; stroke-width: 3; }
.tree { height: 1455px; background: #fff; border: 2px solid #888; border-left-width: 1px; padding: 4px 5px; display: flex; align-items: flex-start; gap: 7px; line-height: 38px; letter-spacing: -.1px; }
.dot { width: 14px; height: 14px; border-radius: 50%; background: #bbb; margin: 11px 0 0; }
.second { margin-top: 5px; }
.filter { display: grid; grid-template-columns: 170px 1fr; grid-auto-rows: 41px; padding: 3px 0 0 5px; font-size: 26px; letter-spacing: -.4px; }
.filter .wide { grid-column: span 2; }
.filter label { display: flex; align-items: center; gap: 8px; line-height: 44px; height: 47px; }
.cb { width: 32px; height: 32px; border-radius: 6px; background: #005fb8; position: relative; top: -2px; }
.cb::after { content: ""; position: absolute; left: 9px; top: 9px; width: 15px; height: 8px; border: solid #fff; border-width: 0 0 2px 2px; transform: rotate(-48deg); }
.sash { width: 5px; background: #dcdcdc; }

.vbar { width: 85px; padding: 13px 0 0 4px; display: flex; flex-direction: column; gap: 5px; border-bottom: 1px solid #ddd; }
.vbar.right { width: 86px; padding-left: 5px; }
.vb { width: 76px; height: 76px; flex: none; display: flex; align-items: center; justify-content: center; }
.vb svg { width: 60px; height: 60px; overflow: visible; }
.vb.on { background: #b3d6f4; box-shadow: inset 0 0 0 1.5px #0078d7; }
.hsep { height: 6px; flex: none; width: 72px; margin-left: 2px; background: linear-gradient(#8c8c8c, #8c8c8c) 0 2px / 100% 2px no-repeat; }
.tagdark { color: #545454; }
.tagblue { color: #1a81c4; }

.sheet { flex: 1; background: #f5f4ef; border: 2px solid #a0a0a0; border-top-width: 1px; overflow: hidden; }
.schematic { display: block; }
.grid { fill: #b4b4b4; shape-rendering: crispEdges; }
.wire path { fill: none; stroke: #009600; stroke-width: 5.5; }
.wire .tiny { stroke-width: 3; }
.junction { fill: #009600; }
.sym, .label { filter: drop-shadow(0 0 2.5px #8adcff) drop-shadow(0 0 2.5px #8adcff); }
.sym path, .sym circle, .sym rect, .pin, .body, .line, .thin { stroke: #840000; fill: none; }
.sym path[fill] { fill: #840000; stroke: none; }
.pin { stroke-width: 6; }
.body { stroke-width: 10; stroke-linejoin: round; }
.line { stroke-width: 7; }
.thin { stroke-width: 5; }
.open { fill: none; stroke: #c03838; stroke-width: 2.5; }
.label text, .pinno text { font: 70px "DejaVu Sans", sans-serif; fill: #006a6e; text-anchor: middle; letter-spacing: 0; }
.label.start text { text-anchor: start; }
.label.end text { text-anchor: end; }
.pinno text { fill: #a90000; }
.anchor { stroke: #0000c8; stroke-width: 3; }
.cursor { stroke: #222; stroke-width: 2.7; fill: none; opacity: .7; }

.status { height: 132px; padding-top: 83px; display: grid; grid-template-columns: 847px 185px 401px 638px 462px 149px 419px 1fr; background: linear-gradient(#d9d9d9, #d9d9d9) 0 83px / 100% 2px no-repeat; line-height: 51px; letter-spacing: .35px; }
.status span { padding-left: 4px; border-left: 2px solid #dcdcdc; margin: 2px 0 1px; white-space: pre; height: 46px; }
.status span:first-child { border: 0; }

.taskbar { height: 120px; color: #fff; display: flex; align-items: center; box-shadow: inset 0 3px #464640; background: linear-gradient(90deg, #102735 0, #12262f 130px, #2b211d 300px, #22231f 430px, #1e2425 640px, #26231d 830px, #1f2322 1080px, #332214 1400px, #28211f 1680px, #332217 1880px, #29211f 2200px, #332318 2500px, #2e2617 2820px, #322316 3300px, #33241a); }
.weather { width: 813px; padding-left: 44px; display: flex; gap: 12px; align-items: center; font-size: 27px; letter-spacing: -.1px; }
.weather svg { margin-top: -15px; }
.weather p, .clock { margin: 0; line-height: 40px; display: flex; flex-direction: column; }
.dim { color: #ccc; }
.start { width: 58px; height: 58px; margin-right: 34px; flex: none; }
.search { width: 549px; height: 80px; flex: none; border-radius: 40px; border: 2px solid #625b54; background: linear-gradient(90deg, #414240, #454440 60%, #51433a); display: flex; align-items: center; padding: 0 14px 0 26px; gap: 25px; font-size: 32px; color: #d8d8d8; }
.food { margin-left: auto; }
.apps { display: flex; margin-left: 5px; }
.app { width: 100px; height: 100px; margin: 0 5px; border-radius: 10px; position: relative; display: flex; align-items: center; justify-content: center; flex: none; }
.app svg { width: 60px; height: 60px; }
.pink { background: #7f4148; }
.active { background: #41332a; box-shadow: inset 0 0 0 2px #51443b; }
.dotmark { position: absolute; bottom: 3px; left: 43px; width: 14px; height: 7px; border-radius: 4px; background: #ff99a4; }
.dotmark.gray { background: #a29a95; }
.dotmark.wide { left: 30px; width: 40px; background: #4cc2ff; }
.badge { position: absolute; left: 54px; top: 8px; width: 38px; height: 40px; border-radius: 50%; background: #5d4037; text-align: center; font-size: 22px; line-height: 34px; color: #ccc; }
.tray { margin-left: auto; padding-right: 49px; display: flex; align-items: center; gap: 17px; }
.tray > svg:first-child { margin-right: 26px; }
.tray > svg:nth-child(2) { margin-right: 17px; }
.w { fill: none; stroke: #fff; stroke-width: 3; }
.clock { text-align: right; width: 136px; margin-left: 16px; font-size: 28px; letter-spacing: .4px; white-space: nowrap; }
```
FILE: grid.js
```js
// Fills the sheet with the 50 mil dot grid; every tenth row and column is heavier.
(function () {
  var step = 19.0175, ox = 159.3, oy = 155.2, d = '';
  for (var i = -8; i < 125; i++) {
    for (var j = -8; j < 83; j++) {
      var w = i % 10 === 0 ? 3 : 1, h = j % 10 === 0 ? 3 : 1;
      var x = Math.floor(ox + i * step) - (w - 1) / 2, y = Math.floor(oy + j * step) - (h - 1) / 2;
      d += 'M' + x + ' ' + y + 'h' + w + 'v' + h + 'h' + -w + 'z';
    }
  }
  document.getElementById('grid').setAttribute('d', d);
})();
```
